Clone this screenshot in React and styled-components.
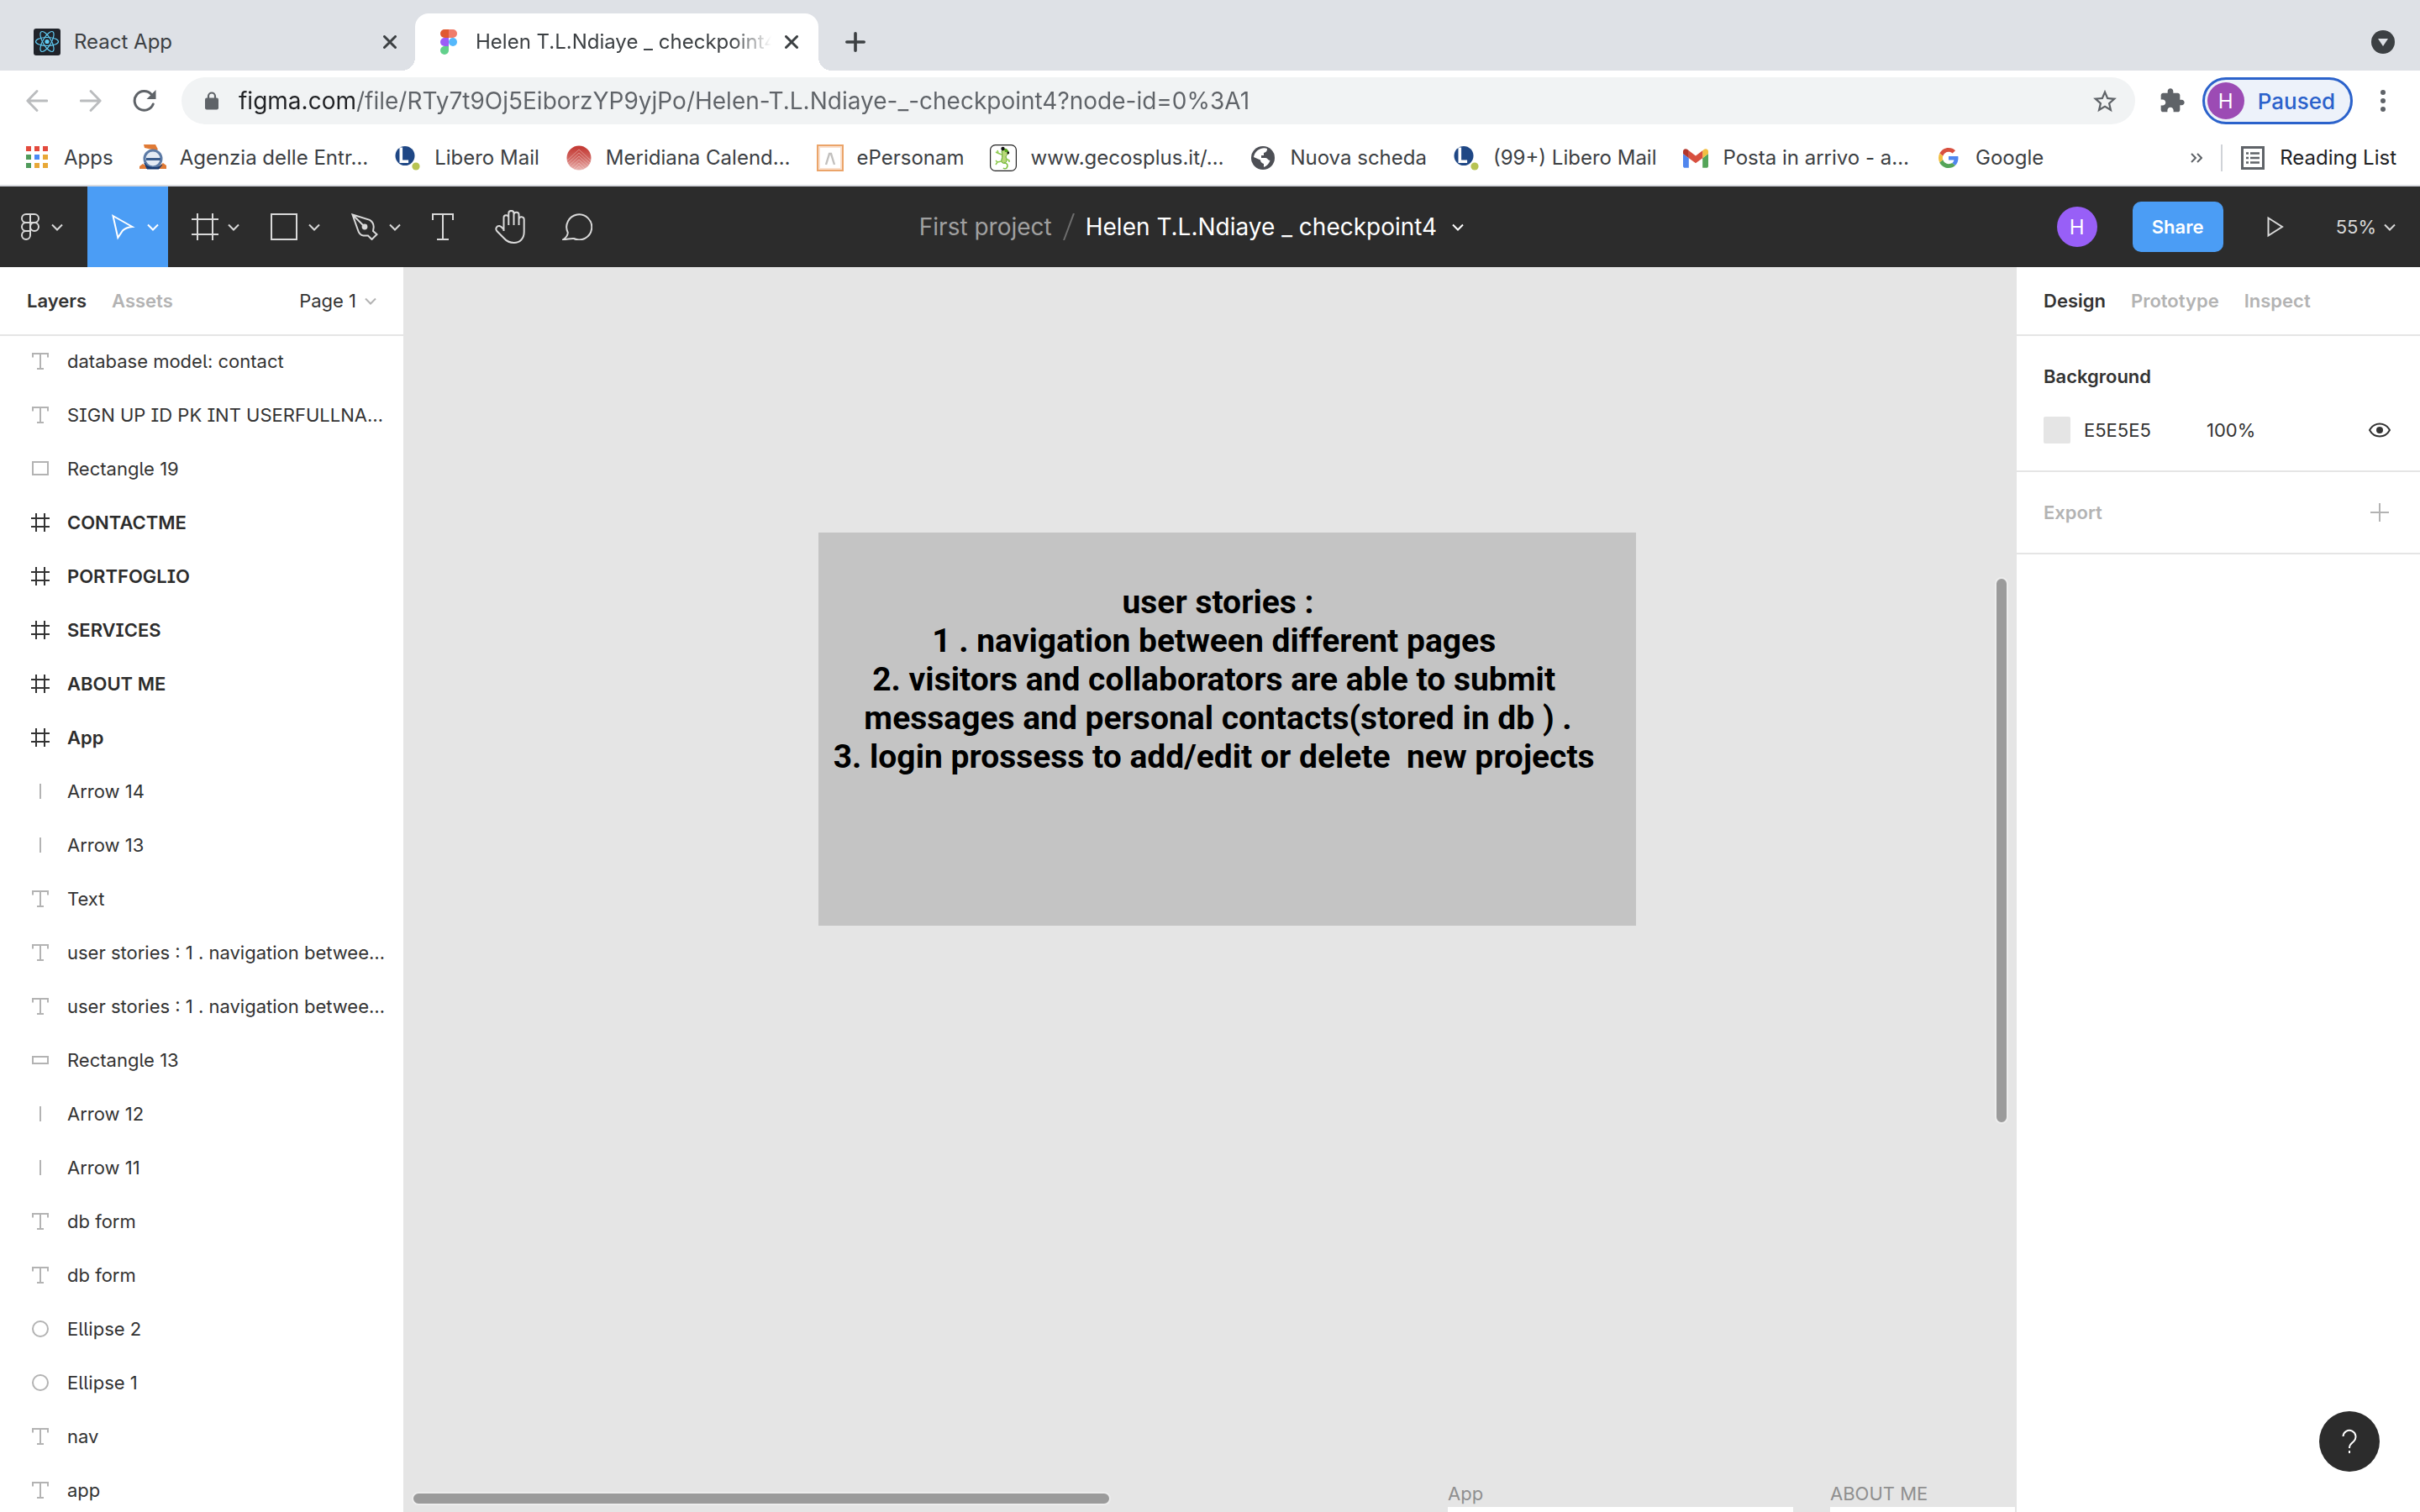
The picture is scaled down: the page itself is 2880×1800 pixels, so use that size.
import React from "react";
import styled, { createGlobalStyle, css } from "styled-components";

const GlobalStyle = createGlobalStyle`
  * { box-sizing: border-box; }
  body {
    margin: 0;
    font-family: Inter, "Liberation Sans", sans-serif;
    color: #333;
    background: #fff;
  }
  button, input {
    font: inherit;
    color: inherit;
    border: 0;
    padding: 0;
    margin: 0;
    background: none;
    outline: 0;
  }
  a { color: inherit; text-decoration: none; }
  ul { list-style: none; margin: 0; padding: 0; }
  svg { display: block; flex: none; }
`;

const Page = styled.div`
  display: flex;
  flex-direction: column;
  height: 100vh;
  min-width: 1440px;
  overflow: hidden;
`;

/* ---------- browser chrome ---------- */

const TabStrip = styled.div`
  display: flex;
  align-items: flex-end;
  height: 84px;
  padding: 16px 16px 0;
  background: #dee1e6;
  flex: none;
`;

const Tab = styled.div`
  position: relative;
  display: flex;
  align-items: center;
  gap: 16px;
  width: 480px;
  height: 68px;
  padding: 0 24px;
  color: #3c4043;
  font-size: 24px;
  ${(p) =>
    p.$active &&
    css`
      margin-left: -2px;
      background: #fff;
      border-radius: 16px 16px 0 0;
      &::before,
      &::after {
        content: "";
        position: absolute;
        bottom: 0;
        width: 16px;
        height: 16px;
      }
      &::before {
        left: -16px;
        background: radial-gradient(circle at 0 0, transparent 16px, #fff 16px);
      }
      &::after {
        right: -16px;
        background: radial-gradient(circle at 100% 0, transparent 16px, #fff 16px);
      }
    `}
`;

const FaviconBox = styled.span`
  display: flex;
  align-items: center;
  justify-content: center;
  flex: none;
  width: 32px;
  height: 32px;
`;

const TabTitle = styled.button`
  flex: 1;
  min-width: 0;
  overflow: hidden;
  white-space: nowrap;
  text-align: left;
  line-height: 32px;
  ${(p) =>
    p.$fade &&
    css`
      mask-image: linear-gradient(to right, #000 calc(100% - 48px), transparent);
    `}
`;

const PlainButton = styled.button`
  display: flex;
  align-items: center;
  justify-content: center;
  flex: none;
`;

const NewTab = styled(PlainButton)`
  width: 24px;
  height: 68px;
  margin-left: 32px;
`;

const TabSearch = styled(PlainButton)`
  height: 68px;
  margin-left: auto;
  margin-right: 14px;
`;

const NavBar = styled.div`
  display: flex;
  align-items: center;
  height: 72px;
  padding: 0 12px;
  flex: none;
`;

const NavButton = styled(PlainButton)`
  width: 64px;
  height: 56px;
`;

const Omnibox = styled.div`
  display: flex;
  align-items: center;
  gap: 24px;
  flex: 1;
  height: 56px;
  margin: 0 12px;
  padding: 0 20px 0 28px;
  border-radius: 28px;
  background: #f1f3f4;
`;

const UrlInput = styled.input`
  flex: 1;
  min-width: 0;
  height: 40px;
  font-size: 28px;
  color: #5f6368;
  background: linear-gradient(to right, #202124 ${(p) => p.$host}px, #5f6368 ${(p) => p.$host}px);
  background-clip: text;
  -webkit-text-fill-color: transparent;
`;

const ProfilePill = styled.button`
  display: flex;
  align-items: center;
  gap: 16px;
  height: 56px;
  margin: 0 4px;
  padding: 0 18px 0 3px;
  border: 3px solid #2b62cb;
  border-radius: 28px;
  background: #edf2fa;
  color: #2b62cb;
  font-size: 26px;
  font-weight: 500;
`;

const Avatar = styled.span`
  display: flex;
  align-items: center;
  justify-content: center;
  flex: none;
  width: ${(p) => p.$size}px;
  height: ${(p) => p.$size}px;
  border-radius: 50%;
  background: ${(p) => p.$color};
  color: #fff;
  font-size: 24px;
  font-weight: 400;
`;

const BookmarkBar = styled.nav`
  display: flex;
  align-items: center;
  gap: 31px;
  height: 66px;
  padding: 0 28px;
  border-bottom: 2px solid #d9dbe0;
  color: #3c4043;
  font-size: 24px;
  flex: none;
`;

const Bookmark = styled.a`
  display: flex;
  align-items: center;
  gap: 16px;
  white-space: nowrap;
  line-height: 32px;
`;

const BookmarkTail = styled.div`
  display: flex;
  align-items: center;
  gap: 22px;
  margin-left: auto;
`;

const TailDivider = styled.span`
  width: 2px;
  height: 32px;
  background: #d0d3d8;
`;

const ReadingList = styled.button`
  display: flex;
  align-items: center;
  gap: 18px;
  color: #202124;
  line-height: 32px;
  white-space: nowrap;
`;

/* ---------- editor toolbar ---------- */

const EditorBar = styled.header`
  display: grid;
  grid-template-columns: 1fr auto 1fr;
  height: 96px;
  background: #2c2c2c;
  color: #d9d9d9;
  flex: none;
`;

const Tools = styled.div`
  display: flex;
`;

const Tool = styled.button`
  display: flex;
  align-items: center;
  justify-content: ${(p) => (p.$menu ? "space-between" : "center")};
  width: ${(p) => p.$width}px;
  height: 96px;
  padding: ${(p) => (p.$menu ? "0 11px 0 26px" : "0 2px 0 0")};
  background: ${(p) => (p.$active ? "#4b9df5" : "transparent")};
  color: ${(p) => (p.$active ? "#fff" : "#d9d9d9")};
`;

const MainMenu = styled(Tool)`
  padding: 0 29px 0 25px;
`;

const Breadcrumb = styled.div`
  display: flex;
  align-items: center;
  gap: 13px;
  padding-right: 44px;
  font-size: 28px;
  white-space: nowrap;
`;

const ProjectLink = styled.a`
  color: #a0a0a0;
`;

const FileName = styled.button`
  display: flex;
  align-items: center;
  gap: 18px;
  color: #fff;
`;

const EditorActions = styled.div`
  display: flex;
  align-items: center;
  justify-content: flex-end;
  padding-right: 29px;
  font-size: 22px;
`;

const ShareButton = styled.button`
  width: 108px;
  height: 60px;
  margin: 0 52px 0 42px;
  border-radius: 10px;
  background: #4b9df5;
  color: #fff;
  font-weight: 600;
`;

const ZoomButton = styled.button`
  display: flex;
  align-items: center;
  gap: 9px;
  margin-left: 62px;
`;

/* ---------- workspace ---------- */

const Workspace = styled.div`
  display: flex;
  flex: 1;
  min-height: 0;
`;

const Panel = styled.aside`
  width: 480px;
  flex: none;
  overflow: hidden;
  background: #fff;
  font-size: 22px;
  line-height: 32px;
`;

const LayersPanel = styled(Panel)`
  font-feature-settings: "cv05", "cv08";
`;

const PanelTabs = styled.div`
  display: flex;
  align-items: center;
  gap: 30px;
  height: 82px;
  padding: 0 32px;
  border-bottom: 2px solid #e5e5e5;
`;

const PanelTab = styled.button`
  font-weight: 600;
  color: ${(p) => (p.$active ? "#333" : "#b3b3b3")};
`;

const PageSelect = styled.button`
  display: flex;
  align-items: center;
  gap: 10px;
  margin-left: auto;
`;

const LayerList = styled.ul`
  margin-top: -2px;
`;

const LayerRow = styled.button`
  display: flex;
  align-items: center;
  gap: 16px;
  width: 100%;
  height: 64px;
  padding: 0 16px 0 32px;
  text-align: left;
  font-weight: ${(p) => (p.$frame ? 600 : 400)};
  color: ${(p) => (p.$frame ? "#2c2c2c" : "#333")};
`;

const LayerIcon = styled.span`
  display: flex;
  align-items: center;
  justify-content: center;
  flex: none;
  width: 32px;
  color: ${(p) => (p.$frame ? "#333" : "#b3b3b3")};
`;

const LayerName = styled.span`
  white-space: nowrap;
`;

const Section = styled.section`
  display: flex;
  flex-direction: column;
  padding: 32px;
  border-bottom: 2px solid #e5e5e5;
`;

const SectionHead = styled.div`
  display: flex;
  align-items: center;
  justify-content: space-between;
  height: 32px;
`;

const SectionTitle = styled.h2`
  margin: 0;
  font-size: 22px;
  font-weight: 600;
  color: ${(p) => (p.$muted ? "#b3b3b3" : "#333")};
`;

const FillRow = styled.div`
  display: flex;
  align-items: center;
  height: 32px;
  margin-top: 32px;
`;

const Swatch = styled.button`
  width: 32px;
  height: 32px;
  margin-right: 16px;
  border-radius: 2px;
  background: #e5e5e5;
`;

const ValueInput = styled.input`
  width: ${(p) => p.$width}px;
  height: 32px;
`;

const IconSlot = styled(PlainButton)`
  width: 32px;
  height: 32px;
  margin-left: auto;
`;

const Canvas = styled.main`
  position: relative;
  flex: 1;
  min-width: 0;
  overflow: hidden;
  background: #e5e5e5;
`;

const StoryCard = styled.div`
  position: absolute;
  left: 494px;
  top: 316px;
  width: 973px;
  height: 468px;
  padding: 60px 22px 0 0;
  background: #c4c4c4;
  color: #000;
  font-family: Roboto, "Liberation Sans", sans-serif;
  font-size: 39px;
  font-weight: 700;
  line-height: 46px;
  text-align: center;
  white-space: pre;
`;

const Artboard = styled.div`
  position: absolute;
  left: ${(p) => p.$left}px;
  bottom: 0;
  width: ${(p) => p.$width}px;
`;

const ArtboardLabel = styled.div`
  height: 28px;
  color: #8f8f8f;
  font-size: 22px;
  line-height: 24px;
`;

const ArtboardBody = styled.div`
  height: 6px;
  background: #fff;
`;

const ScrollThumb = styled.div`
  position: absolute;
  border-radius: 8px;
  border: 2px solid #ededed;
  background: #9b9b9b;
  ${(p) =>
    p.$vertical
      ? css`
          right: 10px;
          top: 369px;
          width: 16px;
          height: 651px;
        `
      : css`
          left: 10px;
          bottom: 8px;
          width: 832px;
          height: 16px;
        `}
`;

const HelpButton = styled.button`
  position: fixed;
  right: 48px;
  bottom: 48px;
  display: flex;
  align-items: center;
  justify-content: center;
  width: 72px;
  height: 72px;
  border-radius: 50%;
  background: #2c2c2c;
  color: #fff;
`;

/* ---------- icons ---------- */

const Stroke = ({ w, h, d, sw = 2, children, ...rest }) => (
  <svg width={w} height={h} viewBox={`0 0 ${w} ${h}`} fill="none" stroke="currentColor" strokeWidth={sw} aria-hidden="true" {...rest}>
    {d && <path d={d} />}
    {children}
  </svg>
);

const Chevron = ({ color = "currentColor" }) => (
  <Stroke w={14} h={9} d="M1 1.5l6 6 6-6" stroke={color} />
);
const Close = () => <Stroke w={16} h={16} sw={3} d="M1.5 1.5l13 13M14.5 1.5l-13 13" strokeLinecap="round" />;
const Plus = () => <Stroke w={24} h={24} sw={3.6} d="M12 1.8v20.4M1.8 12h20.4" stroke="#3c4043" strokeLinecap="round" />;

const ReactLogo = () => (
  <svg width="32" height="32" viewBox="0 0 32 32" aria-hidden="true">
    <rect width="32" height="32" rx="3" fill="#20232a" />
    <g fill="none" stroke="#61cdf5" strokeWidth="1.2">
      <ellipse cx="16" cy="15.5" rx="13.5" ry="5" />
      <ellipse cx="16" cy="15.5" rx="13.5" ry="5" transform="rotate(60 16 15.5)" />
      <ellipse cx="16" cy="15.5" rx="13.5" ry="5" transform="rotate(120 16 15.5)" />
    </g>
    <circle cx="16" cy="15.5" r="2.6" fill="#61cdf5" />
  </svg>
);

const FigmaLogo = () => (
  <svg width="20" height="30" viewBox="0 0 20 30" aria-hidden="true">
    <path d="M5 0h5v10H5A5 5 0 0 1 5 0z" fill="#e0592f" />
    <path d="M10 0h5a5 5 0 0 1 0 10h-5z" fill="#f07c6a" />
    <path d="M5 10h5v10H5a5 5 0 0 1 0-10z" fill="#9b5cf8" />
    <circle cx="15" cy="15" r="5" fill="#55b8fb" />
    <path d="M5 20h5v5a5 5 0 1 1-5-5z" fill="#62d08c" />
  </svg>
);

const TabSearchIcon = () => (
  <svg width="28" height="28" viewBox="0 0 28 28" aria-hidden="true">
    <circle cx="14" cy="14" r="14" fill="#3c4043" />
    <path d="M8 10h12l-6 9z" fill="#dee1e6" />
  </svg>
);

const Back = () => <Stroke w={26} h={26} d="M13 1.5L1.8 13 13 24.5M2 13h23" sw={2.8} stroke="#babcbe" strokeLinecap="round" strokeLinejoin="round" />;
const Forward = () => <Stroke w={26} h={26} d="M13 1.5L24.2 13 13 24.5M24 13H1" sw={2.8} stroke="#babcbe" strokeLinecap="round" strokeLinejoin="round" />;
const Reload = () => (
  <svg width="28" height="28" viewBox="0 0 28 28" aria-hidden="true">
    <path d="M24.2 18A11.4 11.4 0 1 1 22 6.2" fill="none" stroke="#5f6368" strokeWidth="3" strokeLinecap="round" />
    <path d="M27.5 1v11h-11z" fill="#5f6368" />
  </svg>
);
const Lock = () => (
  <svg width="16" height="22" viewBox="0 0 16 22" aria-hidden="true">
    <rect y="7.5" width="16" height="14" rx="2" fill="#5f6368" />
    <path d="M4 8V5.5a4 4 0 0 1 8 0V8" fill="none" stroke="#5f6368" strokeWidth="2.2" />
  </svg>
);
const Material = ({ size, d, fill = "#5f6368", viewBox = "0 0 24 24" }) => (
  <svg width={size} height={size} viewBox={viewBox} fill={fill} aria-hidden="true">
    <path d={d} />
  </svg>
);
const STAR = "M22 9.24l-7.19-.62L12 2 9.19 8.63 2 9.24l5.46 4.73L5.82 21 12 17.27 18.18 21l-1.63-7.03L22 9.24zM12 15.4l-3.76 2.27 1-4.28-3.32-2.88 4.38-.38L12 6.1l1.71 4.04 4.38.38-3.32 2.88 1 4.28L12 15.4z";
const PUZZLE = "M20.5 11H19V7c0-1.1-.9-2-2-2h-4V3.5C13 2.12 11.88 1 10.5 1S8 2.12 8 3.5V5H4c-1.1 0-1.99.9-1.99 2v3.8H3.5c1.49 0 2.7 1.21 2.7 2.7s-1.21 2.7-2.7 2.7H2V20c0 1.1.9 2 2 2h3.8v-1.5c0-1.49 1.21-2.7 2.7-2.7 1.49 0 2.7 1.21 2.7 2.7V22H17c1.1 0 2-.9 2-2v-4h1.5c1.38 0 2.5-1.12 2.5-2.5S21.88 11 20.5 11z";

const Globe = () => (
  <svg width="28" height="28" viewBox="0 0 28 28" aria-hidden="true">
    <circle cx="14" cy="14" r="14" fill="#4d4f55" />
    <path
      d="M11.500 3c3-1 6-.7 7.500 0 0 3-1 4-4 5v3h-3v3h5c3 0 2.500 3 5.500 3-1.200 4-4 6.500-7.500 8v-4c-2.500-.8-4-2.200-4-4.500L3 13C4 8 7 4.500 11.500 3z"
      fill="#fff"
    />
  </svg>
);

const Dots = () => (
  <svg width="8" height="28" viewBox="0 0 8 28" fill="#5f6368" aria-hidden="true">
    <circle cx="4" cy="4" r="3" />
    <circle cx="4" cy="14" r="3" />
    <circle cx="4" cy="24" r="3" />
  </svg>
);

const AppsGrid = () => (
  <svg width="32" height="32" viewBox="0 0 32 32" aria-hidden="true">
    {["#e34a3d", "#e34a3d", "#e34a3d", "#509b5b", "#4a8af4", "#e8a837", "#509b5b", "#e8a837", "#e8a837"].map((c, i) => (
      <rect key={i} x={3 + (i % 3) * 10} y={2 + Math.floor(i / 3) * 10} width="6" height="6" fill={c} />
    ))}
  </svg>
);

const Agenzia = () => (
  <svg width="32" height="32" viewBox="0 0 32 32" aria-hidden="true">
    <path d="M5 0h14l3 6-2 1-5-1-9-2z" fill="#e07a35" />
    <path d="M0 29v-3l4-3 5 3 1 3zM32 29v-4l-4-3-5 4-1 3z" fill="#e07a35" />
    <circle cx="16" cy="17" r="10" fill="#e4ebf4" stroke="#5c7ba6" strokeWidth="3" />
    <path d="M8 17.500h17" stroke="#3b5d8d" strokeWidth="3" />
    <path d="M6 22c2 6 16 8 21 2l-4 5H9z" fill="#16386e" stroke="#16386e" strokeWidth="1" />
  </svg>
);

const Libero = () => (
  <svg width="32" height="32" viewBox="0 0 32 32" aria-hidden="true">
    <circle cx="13" cy="13.5" r="11.5" fill="#1f4785" />
    <path d="M8.3 3.5v16.8h8.8" fill="none" stroke="#fff" strokeWidth="3.6" />
    <circle cx="26" cy="26" r="4.6" fill="#b7c353" />
  </svg>
);

const Meridiana = () => (
  <svg width="32" height="32" viewBox="0 0 32 32" aria-hidden="true">
    <defs>
      <linearGradient id="meridiana" x1="0" y1="0" x2="0" y2="1">
        <stop offset="0" stopColor="#c2352f" />
        <stop offset="0.5" stopColor="#d0645f" />
        <stop offset="1" stopColor="#eab5b2" />
      </linearGradient>
      <clipPath id="meridianaClip"><circle cx="16" cy="16" r="14.5" /></clipPath>
    </defs>
    <circle cx="16" cy="16" r="14.5" fill="url(#meridiana)" />
    <g fill="none" stroke="#f3cfcd" strokeOpacity="0.5" strokeWidth="1" clipPath="url(#meridianaClip)">
      <path d="M2 19L16 6l14 13M2 23l14-13 14 13M2 27l14-13 14 13M2 31l14-13 14 13M4 34l12-12 12 12M8 34l8-8 8 8" />
    </g>
  </svg>
);

const EPersonam = () => (
  <svg width="32" height="32" viewBox="0 0 32 32" fill="none" aria-hidden="true">
    <rect x="1" y="1" width="30" height="30" stroke="#eba469" strokeWidth="2" />
    <rect x="3" y="3" width="26" height="26" stroke="#fae0cd" strokeWidth="2" />
    <path d="M11 24l4-13h2l4 13" stroke="#c2c0be" strokeWidth="2.4" />
  </svg>
);

const Gecko = () => (
  <svg width="32" height="32" viewBox="0 0 32 32" fill="none" aria-hidden="true">
    <rect x="0.6" y="0.6" width="30.8" height="30.8" rx="6" fill="#fff" stroke="#222" strokeWidth="1.2" />
    <path d="M14 8c4-4 8-2 8 1 0 3-3 4-3 6 2 3 1 6-1 7-3 1-5-1-4-4 1-3 1-7 0-10z" fill="#b9d87a" stroke="#5da32c" strokeWidth="1" />
    <path d="M17 22c4 0 5 3 3 6-1 1-3 1-4 0" stroke="#7bbf3e" strokeWidth="1.6" />
    <path d="M14 12l-5-2-2-1m3 1l-1-3M14 20l-5 1-2 3m2-3l-2-2M19 17l4 2v2" stroke="#8ecb50" strokeWidth="1.6" />
    <path d="M17 5c2-1 5 1 5 4l-4 0z" fill="#56a61f" />
    <circle cx="15.5" cy="5" r="2.2" fill="#111" />
    <circle cx="21.8" cy="10" r="1.4" fill="#111" />
  </svg>
);

const Gmail = () => (
  <svg width="30" height="23" viewBox="52 42 88 66" aria-hidden="true">
    <path fill="#5086ee" d="M58 108h14V74L52 59v43c0 3.32 2.69 6 6 6" />
    <path fill="#55a559" d="M120 108h14c3.32 0 6-2.69 6-6V59l-20 15" />
    <path fill="#f2bf42" d="M120 48v26l20-15v-8c0-7.42-8.47-11.65-14.4-7.2" />
    <path fill="#d8503f" d="M72 74V48l24 18 24-18v26L96 92" />
    <path fill="#b3362b" d="M52 51v8l20 15V48l-5.6-4.2c-5.94-4.45-14.4-.22-14.4 7.2" />
  </svg>
);

const GoogleG = () => (
  <svg width="24" height="24" viewBox="0 0 48 48" aria-hidden="true">
    <path fill="#d8503f" d="M24 9.5c3.54 0 6.71 1.22 9.21 3.6l6.85-6.85C35.9 2.38 30.47 0 24 0 14.62 0 6.51 5.38 2.56 13.22l7.98 6.19C12.43 13.72 17.74 9.5 24 9.5z" />
    <path fill="#5086ee" d="M46.98 24.55c0-1.57-.15-3.09-.38-4.55H24v9.02h12.94c-.58 2.96-2.26 5.48-4.78 7.18l7.73 6c4.51-4.18 7.09-10.36 7.09-17.65z" />
    <path fill="#f2bf42" d="M10.53 28.59c-.48-1.45-.76-2.99-.76-4.59s.27-3.14.76-4.59l-7.98-6.19C.92 16.46 0 20.12 0 24c0 3.88.92 7.54 2.56 10.78l7.97-6.19z" />
    <path fill="#55a559" d="M24 48c6.48 0 11.93-2.13 15.89-5.81l-7.73-6c-2.15 1.45-4.92 2.3-8.16 2.3-6.26 0-11.57-4.22-13.47-9.91l-7.98 6.19C6.51 42.62 14.62 48 24 48z" />
  </svg>
);

const ReadingIcon = () => (
  <svg width="28" height="28" viewBox="0 0 28 28" fill="none" stroke="#5f6368" aria-hidden="true">
    <rect x="1.5" y="1.5" width="25" height="25" strokeWidth="3" />
    <path d="M6 8.5h3M6 14h3M6 19.5h3M11 8.5h11M11 14h11M11 19.5h11" strokeWidth="2.6" />
  </svg>
);

const FigmaMenuIcon = () => (
  <Stroke w={22} h={32} d="M11 1H6a5 5 0 0 0 0 10h5zM11 1h5a5 5 0 0 1 0 10h-5zM11 11H6a5 5 0 0 0 0 10h5zM6 21h5v5a5 5 0 1 1-5-5z">
    <circle cx="16" cy="16" r="5" />
  </Stroke>
);
const MoveIcon = () => <Stroke w={32} h={32} d="M4.500 3L27.500 16c-5 .5-9 2-11.500 4.500L10.300 29z" />;
const FrameIcon = () => <Stroke w={34} h={32} d="M9 0v32M27 0v32M2 7h32M2 25h32" />;
const RectIcon = () => <Stroke w={32} h={32} d="M1 1h30v30H1z" />;
const PenIcon = () => (
  <Stroke w={32} h={32} d="M1.5 1.5l20.5 6.3c3.4 2.2 4.8 5.5 4.7 8.7l-.7 4.5 4.5 4-6 6-4.5-4.5h-5.500c-3.500-.5-5.500-3-6.500-6.500zM1.500 1.500L16 16">
    <circle cx="16" cy="16" r="2.400" fill="currentColor" />
  </Stroke>
);
const TextIcon = () => <Stroke w={26} h={32} d="M1 8V1h24v7M13 1v30M6 31h14" />;
const HandIcon = () => (
  <Stroke w={36} h={40} d="M10.500 25V9.500a2.900 2.900 0 0 1 5.800-.5V18M16.300 9V4a3 3 0 0 1 6.200 0v14M22.500 5.500a3 3 0 0 1 6 .5v12M28.500 11a3 3 0 0 1 6.200.5V26c0 8-5 13-12 13-6 0-9-2-12-5.500L2.300 25c-2.300-3 0-6.500 3.200-6 2.500.4 3.500 2.500 5 4.500" />
);
const CommentIcon = () => <Stroke w={36} h={32} d="M1.500 31c3-2 5-5 5.300-8A15 15 0 1 1 14 30c-4-.5-8 1-12.500 1z" />;
const PlayIcon = () => <Stroke w={20} h={26} d="M1.500 2.500l16.500 10.500-16.500 10.500z" />;
const Slash = () => <Stroke w={14} h={32} d="M13 0L1 32" stroke="#6e6e6e" />;

const EyeIcon = () => (
  <Stroke w={26} h={18} d="M1 9c2.500-4.500 7-7.500 12-7.500S22.500 4.500 25 9c-2.500 4.500-7 7.500-12 7.500S3.500 13.500 1 9z">
    <circle cx="13" cy="9" r="4" fill="currentColor" stroke="none" />
  </Stroke>
);
const HelpIcon = () => (
  <Stroke w={18} h={30} d="M1.500 9a7.500 7.500 0 1 1 12.500 6c-3 2.500-5 3.500-5 7.500v.5M9 26v3" />
);

const layerIcons = {
  text: <Stroke w={20} h={20} d="M1 5.500V1h18v4.500M10 1v18M6 19h8" />,
  rect: <Stroke w={20} h={18} d="M1 1h18v15H1z" />,
  thin: <Stroke w={20} h={10} d="M1 1h18v8H1z" />,
  line: <Stroke w={2} h={18} d="M1 0v18" />,
  ellipse: (
    <Stroke w={20} h={20}>
      <circle cx="10" cy="10" r="9" />
    </Stroke>
  ),
  frame: <Stroke w={22} h={22} d="M6 0v22M16 0v22M0 6h22M0 16h22" />,
};

/* ---------- content ---------- */

const bookmarks = [
  { name: "Apps", icon: <AppsGrid /> },
  { name: "Agenzia delle Entr…", icon: <Agenzia /> },
  { name: "Libero Mail", icon: <Libero /> },
  { name: "Meridiana Calend…", icon: <Meridiana /> },
  { name: "ePersonam", icon: <EPersonam /> },
  { name: "www.gecosplus.it/…", icon: <Gecko /> },
  { name: "Nuova scheda", icon: <Globe /> },
  { name: "(99+) Libero Mail", icon: <Libero /> },
  { name: "Posta in arrivo - a…", icon: <Gmail /> },
  { name: "Google", icon: <GoogleG /> },
];

const layers = [
  ["text", "database model: contact"],
  ["text", "SIGN UP ID PK INT USERFULLNA…"],
  ["rect", "Rectangle 19"],
  ["frame", "CONTACTME"],
  ["frame", "PORTFOGLIO"],
  ["frame", "SERVICES"],
  ["frame", "ABOUT ME"],
  ["frame", "App"],
  ["line", "Arrow 14"],
  ["line", "Arrow 13"],
  ["text", "Text"],
  ["text", "user stories : 1 . navigation betwee…"],
  ["text", "user stories : 1 . navigation betwee…"],
  ["thin", "Rectangle 13"],
  ["line", "Arrow 12"],
  ["line", "Arrow 11"],
  ["text", "db form"],
  ["text", "db form"],
  ["ellipse", "Ellipse 2"],
  ["ellipse", "Ellipse 1"],
  ["text", "nav"],
  ["text", "app"],
];

const stories = [
  "user stories :",
  "1 . navigation between different pages ",
  "2. visitors and collaborators are able to submit ",
  "messages and personal contacts(stored in db ) .",
  "3. login prossess to add/edit or delete  new projects ",
];

function BrowserChrome() {
  return (
    <>
      <TabStrip>
        <Tab>
          <FaviconBox><ReactLogo /></FaviconBox>
          <TabTitle>React App</TabTitle>
          <PlainButton aria-label="Close tab"><Close /></PlainButton>
        </Tab>
        <Tab $active>
          <FaviconBox><FigmaLogo /></FaviconBox>
          <TabTitle $fade>Helen T.L.Ndiaye _ checkpoint4</TabTitle>
          <PlainButton aria-label="Close tab"><Close /></PlainButton>
        </Tab>
        <NewTab aria-label="New tab"><Plus /></NewTab>
        <TabSearch aria-label="Search tabs"><TabSearchIcon /></TabSearch>
      </TabStrip>
      <NavBar>
        <NavButton aria-label="Back"><Back /></NavButton>
        <NavButton aria-label="Forward"><Forward /></NavButton>
        <NavButton aria-label="Reload"><Reload /></NavButton>
        <Omnibox>
          <Lock />
          <UrlInput
            aria-label="Address"
            $host={138}
            defaultValue="figma.com/file/RTy7t9Oj5EiborzYP9yjPo/Helen-T.L.Ndiaye-_-checkpoint4?node-id=0%3A1"
          />
          <PlainButton aria-label="Bookmark this page"><Material size={32} d={STAR} viewBox="1 0 22 23" /></PlainButton>
        </Omnibox>
        <NavButton aria-label="Extensions"><Material size={32} d={PUZZLE} /></NavButton>
        <ProfilePill>
          <Avatar $size={44} $color="#9c4bb4">H</Avatar>
          Paused
        </ProfilePill>
        <NavButton aria-label="Browser menu"><Dots /></NavButton>
      </NavBar>
      <BookmarkBar aria-label="Bookmarks">
        {bookmarks.map((b) => (
          <Bookmark href="#" key={b.name}>
            <FaviconBox>{b.icon}</FaviconBox>
            {b.name}
          </Bookmark>
        ))}
        <BookmarkTail>
          <PlainButton aria-label="More bookmarks">
            <Stroke w={14} h={12} d="M1 1l5 5-5 5M8 1l5 5-5 5" stroke="#5f6368" />
          </PlainButton>
          <TailDivider />
          <ReadingList>
            <ReadingIcon />
            Reading List
          </ReadingList>
        </BookmarkTail>
      </BookmarkBar>
    </>
  );
}

function Toolbar() {
  return (
    <EditorBar>
      <Tools>
        <MainMenu $menu $width={104} aria-label="Main menu"><FigmaMenuIcon /><Chevron /></MainMenu>
        <Tool $menu $active $width={96} aria-label="Move"><MoveIcon /><Chevron /></Tool>
        <Tool $menu $width={96} aria-label="Frame"><FrameIcon /><Chevron /></Tool>
        <Tool $menu $width={96} aria-label="Rectangle"><RectIcon /><Chevron /></Tool>
        <Tool $menu $width={96} aria-label="Pen"><PenIcon /><Chevron /></Tool>
        <Tool $width={80} aria-label="Text"><TextIcon /></Tool>
        <Tool $width={80} aria-label="Hand"><HandIcon /></Tool>
        <Tool $width={80} aria-label="Comment"><CommentIcon /></Tool>
      </Tools>
      <Breadcrumb>
        <ProjectLink href="#">First project</ProjectLink>
        <Slash />
        <FileName>
          Helen T.L.Ndiaye _ checkpoint4
          <Chevron />
        </FileName>
      </Breadcrumb>
      <EditorActions>
        <Avatar $size={48} $color="#985ff7">H</Avatar>
        <ShareButton>Share</ShareButton>
        <PlainButton aria-label="Present"><PlayIcon /></PlainButton>
        <ZoomButton>
          55%
          <Chevron />
        </ZoomButton>
      </EditorActions>
    </EditorBar>
  );
}

function LeftPanel() {
  return (
    <LayersPanel>
      <PanelTabs>
        <PanelTab $active>Layers</PanelTab>
        <PanelTab>Assets</PanelTab>
        <PageSelect>
          Page 1
          <Chevron color="#b3b3b3" />
        </PageSelect>
      </PanelTabs>
      <LayerList>
        {layers.map(([kind, name], i) => (
          <li key={i}>
            <LayerRow $frame={kind === "frame"}>
              <LayerIcon $frame={kind === "frame"}>{layerIcons[kind]}</LayerIcon>
              <LayerName>{name}</LayerName>
            </LayerRow>
          </li>
        ))}
      </LayerList>
    </LayersPanel>
  );
}

function RightPanel() {
  return (
    <Panel>
      <PanelTabs>
        <PanelTab $active>Design</PanelTab>
        <PanelTab>Prototype</PanelTab>
        <PanelTab>Inspect</PanelTab>
      </PanelTabs>
      <Section>
        <SectionHead><SectionTitle>Background</SectionTitle></SectionHead>
        <FillRow>
          <Swatch aria-label="Background colour" />
          <ValueInput $width={146} aria-label="Colour hex" defaultValue="E5E5E5" />
          <ValueInput $width={100} aria-label="Opacity" defaultValue="100%" />
          <IconSlot aria-label="Toggle visibility"><EyeIcon /></IconSlot>
        </FillRow>
      </Section>
      <Section>
        <SectionHead>
          <SectionTitle $muted>Export</SectionTitle>
          <IconSlot aria-label="Add export">
            <Stroke w={22} h={22} d="M11 0v22M0 11h22" stroke="#b3b3b3" />
          </IconSlot>
        </SectionHead>
      </Section>
    </Panel>
  );
}

export default function App() {
  return (
    <Page>
      <GlobalStyle />
      <BrowserChrome />
      <Toolbar />
      <Workspace>
        <LeftPanel />
        <Canvas>
          <StoryCard>
            {stories.map((line) => (
              <div key={line}>{line}</div>
            ))}
          </StoryCard>
          <Artboard $left={1243} $width={411}>
            <ArtboardLabel>App</ArtboardLabel>
            <ArtboardBody />
          </Artboard>
          <Artboard $left={1698} $width={220}>
            <ArtboardLabel>ABOUT ME</ArtboardLabel>
            <ArtboardBody />
          </Artboard>
          <ScrollThumb $vertical />
          <ScrollThumb />
        </Canvas>
        <RightPanel />
      </Workspace>
      <HelpButton aria-label="Help"><HelpIcon /></HelpButton>
    </Page>
  );
}
